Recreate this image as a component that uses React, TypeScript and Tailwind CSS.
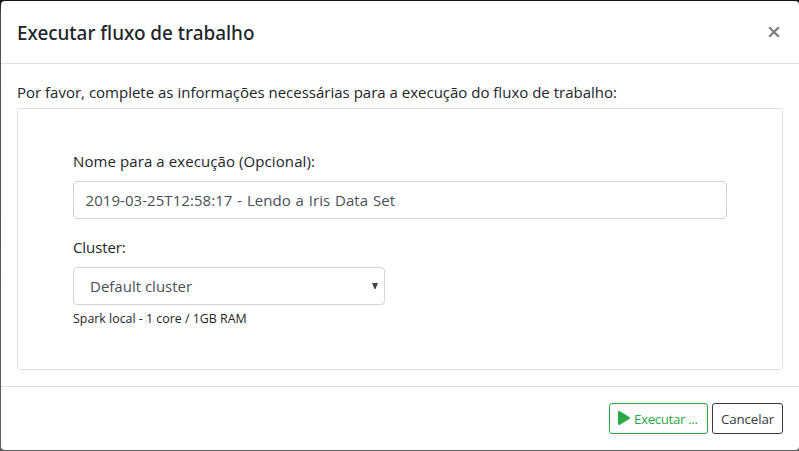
import React from "react";

export default function App() {
  return (
    <div className="h-[451px] w-[799px] overflow-hidden bg-linear-to-b from-[#15121a] from-[0.5%] via-[#4f4f50] via-[3%] to-[#5f5f60] pt-px pl-px font-['Open_Sans','Noto_Sans',sans-serif] text-[#212529]">
      <div className="flex h-[449px] w-[798px] flex-col rounded-[4px] bg-white">
        <header className="flex h-[63px] shrink-0 items-center justify-between border-b border-[#dee2e6] pr-[18px] pl-4">
          <h5 className="pt-px font-['Noto_Sans','Open_Sans',sans-serif] text-[18.9px] leading-[30px] font-medium whitespace-nowrap">
            <span>Executar fluxo de trabalho</span>
          </h5>
          <button aria-label="Fechar" className="flex text-[#7f7f7f]">
            <svg width="14" height="14" viewBox="0 0 14 14" fill="none" stroke="currentColor" strokeWidth="2.3">
              <path d="M2.2 2.2 11.8 11.8M11.8 2.2 2.2 11.8" />
            </svg>
          </button>
        </header>
        <main className="h-[322px] px-4 pt-4">
          <p className="h-7 text-[15px] leading-6 whitespace-nowrap">
            <span>Por favor, complete as informações necessárias para a execução do fluxo de trabalho:</span>
          </p>
          <section className="h-[262px] w-[766px] rounded-[4px] border border-[#dfdfdf] px-[55px] pt-[40px]">
            <label className="block h-8 text-[15px] leading-6 tracking-[0.09px] whitespace-nowrap">
              <span>Nome para a execução (Opcional):</span>
            </label>
            <div className="flex h-[38px] w-[654px] items-center rounded-[4px] border border-[#ced4da] px-[11.5px] text-[15px] tracking-[0.06px] [word-spacing:0.8px] whitespace-nowrap text-[#495057]">
              <span>2019-03-25T12:58:17 - Lendo a Iris Data Set</span>
            </div>
            <label className="mt-4 block h-8 text-[15px] leading-6">
              <span className="tracking-[-0.1px]">Cluster:</span>
            </label>
            <div className="flex h-[38px] w-[312px] items-center justify-between rounded-[4px] border border-[#ced4da] pr-1.5 pl-4 text-[15px] text-[#495057]">
              <span>Default cluster</span>
              <svg width="6" height="6" viewBox="0 0 6 6" fill="#3f464d">
                <path d="M0 0h6L3.5 6h-1z" />
              </svg>
            </div>
            <small className="block pt-px text-[12.4px] leading-[26px]">
              <span>Spark local - 1 core / 1GB RAM</span>
            </small>
          </section>
        </main>
        <footer className="flex flex-1 justify-end gap-1 border-t border-[#dee2e6] pt-4 pr-4">
          <button className="flex h-[31px] w-[99px] items-center rounded-[3px] border border-[#28a745] pl-2 text-[13.3px] whitespace-nowrap text-[#28a745]">
            <svg className="mr-1 mb-px shrink-0" width="12" height="14" viewBox="0 0 12 14" fill="currentColor">
              <path d="M0 1.3C0 .2 1 -.2 1.9.3L11.3 6c.9.5.9 1.5 0 2L1.9 13.7C1 14.2 0 13.7 0 12.7z" />
            </svg>
            <span className="pt-0.5 tracking-[-0.35px]">Executar ...</span>
          </button>
          <button className="flex h-[31px] w-[71px] items-center justify-center rounded-[3px] border border-[#343a40] text-[13.3px] whitespace-nowrap text-[#343a40]">
            <span className="pt-0.5 tracking-[-0.1px]">Cancelar</span>
          </button>
        </footer>
      </div>
    </div>
  );
}
